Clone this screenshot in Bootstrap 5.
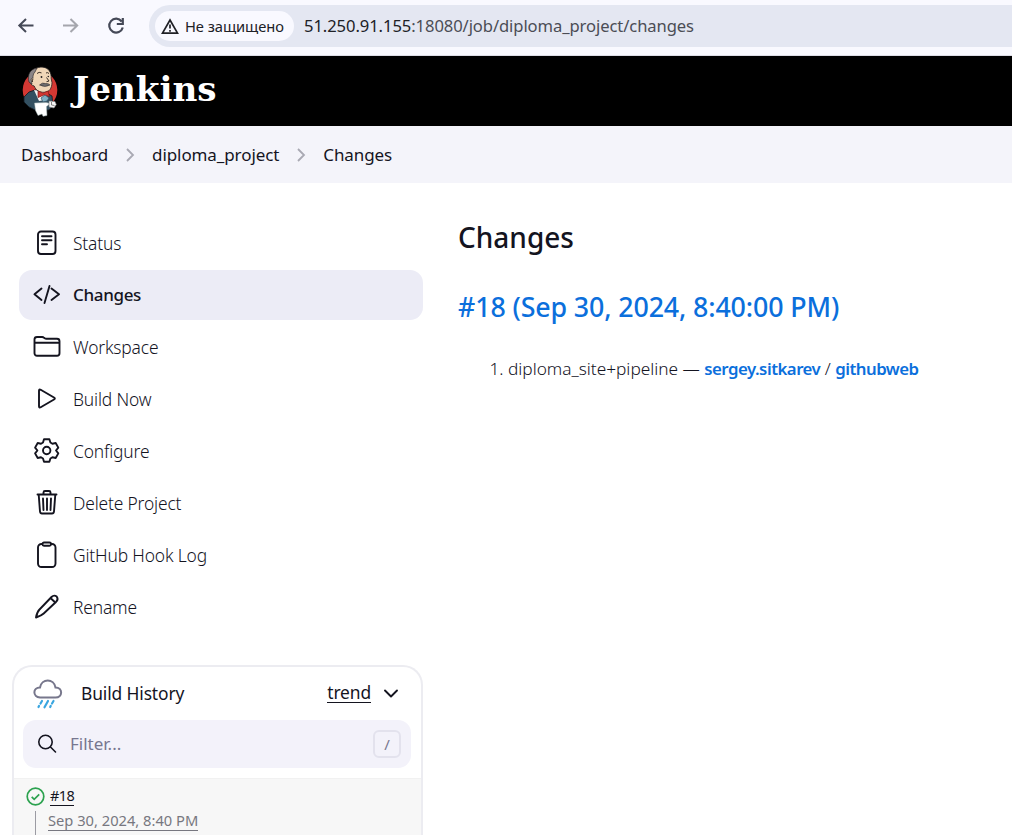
<!DOCTYPE html>
<html lang="en">
<head>
<meta charset="utf-8">
<title>diploma_project Changes [Jenkins]</title>
<link href="https://cdn.jsdelivr.net/npm/bootstrap@5.3.0/dist/css/bootstrap.min.css" rel="stylesheet">
<style>
body{font-family:"Noto Sans","Open Sans",sans-serif;color:#14141f;background:#fff;overflow:hidden;height:835px}
.page{width:1012px;height:835px;overflow:hidden}
svg{flex:none;display:block}
a{text-decoration:none;color:#0b6fdc}
.browser-bar{height:56px;background:#f9f9ff;border-bottom:1px solid #dddde6;padding:5px 0 8px 15px}
.omni{height:42px;margin-left:22px;background:#e4e7f2;border-radius:21px 0 0 21px;padding-left:6px}
.chip{height:30px;width:139px;border-radius:15px;background:#f9f9ff;padding-left:6px;font-size:14.7px;letter-spacing:-.05px;color:#202126}
.chip span{margin-left:6px}
.url{margin-left:10px;font-size:16.6px;color:#4b4d55;letter-spacing:-.09px;white-space:nowrap}
.url b{font-weight:400;color:#202126;letter-spacing:-.08px}
.masthead{height:70px;background:#000;padding-left:20px}
.brand{font:700 34.2px/1 "DejaVu Serif",serif;color:#fff;margin:-3px 0 0 13px}
.crumbs{height:57px;background:#f4f4fa;padding-left:21px;font-size:17px;letter-spacing:-.1px;font-weight:450}
.side{width:423px;padding:35px 0 0 19px}
.task{height:50px;margin:0 0 2px;width:404px;border-radius:13px;padding-left:14px;font-size:17.4px;letter-spacing:-.16px;font-weight:300}
.task.on{background:#ececf6;font-weight:500;font-size:17px;letter-spacing:-.35px}
.task span{margin-left:12px}
.ink{fill:none;stroke:#14141f;stroke-width:1.9;stroke-linecap:round;stroke-linejoin:round}
.history{width:411px;height:220px;margin:33px 0 0 -7px;border:2px solid #ececf1;border-radius:20px 20px 0 0;border-bottom:0}
.history-head{height:53px;padding:0 22px 0 19px;font-size:17.4px;letter-spacing:-.12px;font-weight:450}
.under{border-bottom:1.5px solid currentColor}
.filter{height:48px;margin:0 10px 10px 9px;border-radius:13px;background:#f3f2fa;padding:0 10px 0 13px;font-size:17px;color:#77778f}
.key{width:28px;height:28px;border:2px solid #e3e2ed;border-radius:6px;font-size:15px}
.runs{background:#f7f7f7;height:80px;padding:7px 0 0 12px;border-top:1px solid #f1f1f1}
.run-date{font-size:14.7px;color:#777780;margin:5px 0 0 9px;padding-left:12px;border-left:1px solid #9b9ba3;height:30px;line-height:19px}
.main-panel{padding:36px 0 0 35px}
h1{font-size:28px;font-weight:500;line-height:36px;margin:0}
h2{font-size:26.8px;font-weight:500;line-height:36px;margin:34px 0 0;letter-spacing:-.13px;color:#0b6fdc}
.log{font-size:17.3px;font-weight:300;line-height:24px;margin:32px 0 0;padding-left:50px;letter-spacing:0}
.log li{letter-spacing:-.02px;white-space:nowrap}
.log a{font-weight:600;font-size:16.8px;letter-spacing:-.5px}
</style>
</head>
<body>
<div class="page">
  <div class="browser-bar d-flex align-items-center">
    <svg width="22" height="22" viewBox="0 0 22 22" fill="none" stroke="#454957" stroke-width="2"><path d="M18.5 10.5H4.5M11 4l-6.7 6.5L11 17"/></svg>
    <svg width="22" height="22" viewBox="0 0 22 22" fill="none" stroke="#a5a6ad" stroke-width="2" style="margin-left:23px"><path d="M3 10.500H17M10.500 4l6.700 6.500L10.500 17"/></svg>
    <svg width="22" height="22" viewBox="0 0 22 22" fill="none" stroke="#454957" stroke-width="2.200" style="margin-left:23px"><path d="M16.700 6.500A6.900 6.900 0 1 0 17.800 12.500M17.800 3v6h-6"/></svg>
    <div class="omni d-flex align-items-center flex-grow-1">
      <div class="chip d-flex align-items-center">
        <svg width="18" height="17" viewBox="0 0 18 17" fill="none" stroke="#202126" stroke-width="1.700"><path d="M9 2L16.500 15.200H1.500zM9 6.500v4M9 12v1.700"/></svg>
        <span>Не защищено</span>
      </div>
      <div class="url"><b>51.250.91.155</b>:18080/job/diploma_project/changes</div>
    </div>
  </div>

  <header class="masthead d-flex align-items-center">
    <svg width="40" height="52" viewBox="0 0 40 52">
      <ellipse cx="20" cy="25" rx="17.300" ry="18.500" fill="#d33833"/>
      <path d="M4 32l5-5 6-2 10 2 7 4 1 10-4 4H15l-6-3-5-5z" fill="#335061" stroke="#101820" stroke-width=".8"/>
      <path d="M14 25l5 11 7-1 1-8z" fill="#f4f4f4"/>
      <path d="M9.500 14C10 5 17 1.500 23 2.200c6 .6 8.500 5.500 8.200 11.500l.8 4c-.2 6-3 9.300-7.500 9.600-5 .2-8.500-1.700-10.300-6.300-3-.6-5-3.500-4.700-7z" fill="#f0d6b7" stroke="#231f20" stroke-width=".8"/>
      <path d="M9 17C7 10 10 4 17 3l-2 4c-2 2-2 4-2 6l-2 1 1 5z" fill="#8a8486" stroke="#231f20" stroke-width=".6"/>
      <path d="M17 8.500q2-2 4.500-.6M26 8q1.500-1 3 .5M26.500 12.500l2.500 3.500-2.500.7M13.500 14q-2 0-1 3" fill="none" stroke="#3b3028" stroke-width="1"/>
      <circle cx="21.500" cy="12" r=".9" fill="#231f20"/><circle cx="28.300" cy="11.500" r=".8" fill="#231f20"/>
      <path d="M19.500 20q3-3 6-1.500 3-.5 4.500 1.500-5 3-10.500 0z" fill="#6d6b6d" stroke="#231f20" stroke-width=".5"/>
      <path d="M18 26l5 2 5-2 1.500 5.500-5.500-1.500-6 2.500z" fill="#d33833" stroke="#7d1715" stroke-width=".7"/>
      <path d="M21 33l4-3 4 3-2 3-4 1z" fill="#81b0c4" stroke="#335061" stroke-width=".7"/>
      <path d="M14.500 38l11.500-.5 4.500 1-4 3 .5 9-4 .8-1-2.300-4 1.500-2.500-5z" fill="#fff" stroke="#9aa" stroke-width=".5"/>
      <path d="M29 36l6 .5 1.300 3-2.300 3.500-5-1z" fill="#f7f7f7" stroke="#777" stroke-width=".6"/><path d="M31.500 37v3l3 .5" fill="none" stroke="#555" stroke-width=".7"/>
    </svg>
    <div class="brand">Jenkins</div>
  </header>

  <nav class="crumbs d-flex align-items-center">
    <span>Dashboard</span>
    <svg width="12" height="16" viewBox="0 0 12 16" fill="none" stroke="#a9a9b3" stroke-width="1.800" style="margin:0 16px"><path d="M3 2l6 6-6 6"/></svg>
    <span>diploma_project</span>
    <svg width="12" height="16" viewBox="0 0 12 16" fill="none" stroke="#a9a9b3" stroke-width="1.800" style="margin:0 16px"><path d="M3 2l6 6-6 6"/></svg>
    <span>Changes</span>
  </nav>

  <div class="d-flex">
    <aside class="side flex-shrink-0">
      <div class="task d-flex align-items-center"><svg class="ink" width="28" height="28" viewBox="0 0 28 28"><rect x="5" y="2.500" width="17.500" height="22.500" rx="3"/><path d="M9 7.200h9.500M9 11.200h9.500M9 15.200h5"/></svg><span>Status</span></div>
      <div class="task on d-flex align-items-center"><svg class="ink" width="28" height="28" viewBox="0 0 28 28"><path d="M8.500 7.500L1.500 13.300l7 5.700M18.500 7.500l7.500 5.800-7.500 5.700M16.500 5L11.500 22"/></svg><span>Changes</span></div>
      <div class="task d-flex align-items-center"><svg class="ink" width="28" height="28" viewBox="0 0 28 28"><path d="M1.500 9.700h25M1.500 20V6.500a2.500 2.500 0 0 1 2.500-2.500h5.200q1 0 1.800.8l.7.500q.7.500 1.600.5H24a2.500 2.500 0 0 1 2.500 2.500V20.300a2.500 2.500 0 0 1-2.500 2.500H4a2.500 2.500 0 0 1-2.500-2.500z"/></svg><span>Workspace</span></div>
      <div class="task d-flex align-items-center"><svg class="ink" width="28" height="28" viewBox="0 0 28 28"><path d="M6 5.800v15.400q0 2 1.700 1L21 14.500q1.700-1 0-2L7.700 4.800Q6 4 6 5.800z"/></svg><span>Build Now</span></div>
      <div class="task d-flex align-items-center"><svg class="ink" width="28" height="28" viewBox="0 0 28 28"><circle cx="13.700" cy="13.500" r="3.700"/><path d="M11 2.300h5.400l1 3.200 2 1.200 3.300-.7L25.300 10.600 23 13.500l2.300 2.900L22.700 21l-3.300-.7-2 1.200-1 3.200H11l-1-3.200-2-1.200-3.300.7L2.100 16.400l2.300-2.900L2.100 10.600 4.700 6l3.300.7 2-1.200z"/></svg><span>Configure</span></div>
      <div class="task d-flex align-items-center"><svg class="ink" width="28" height="28" viewBox="0 0 28 28"><path d="M4.500 5.500h19M5.700 5.500l1.300 17q.2 2 2 2h10q1.800 0 2-2l1.300-17M10.500 5V3.500Q10.500 2 12 2h4q1.500 0 1.500 1.500V5M14 9.500v11.500M10 9.500l.5 11.500M18 9.500L17.500 21"/></svg><span>Delete Project</span></div>
      <div class="task d-flex align-items-center"><svg class="ink" width="28" height="28" viewBox="0 0 28 28"><rect x="5" y="3" width="17.500" height="23" rx="3.500"/><rect x="9.500" y="1.500" width="8.500" height="3.300" rx="1.500" fill="#fff"/></svg><span>GitHub Hook Log</span></div>
      <div class="task d-flex align-items-center"><svg class="ink" width="28" height="28" viewBox="0 0 28 28"><path d="M3 24.500q1-5.500 3.500-8L18.500 4Q21 1.500 23.700 3.500q2 2.700-.5 5.200L10.700 20.500Q8.500 22.500 3 24.500zM17.500 5l5 4.700"/></svg><span>Rename</span></div>

      <section class="history overflow-hidden">
        <div class="history-head d-flex align-items-center">
          <svg width="30" height="32" viewBox="0 0 30 32" fill="none" stroke-linecap="round" stroke-width="2"><path d="M7 19.500C-.5 19-.5 9.500 7 9.500 8.500 0 21 0 22.500 9.500c7.500 0 7.500 10 0 10z" stroke="#77778c"/><path d="M9 23l-1.500 2.500M6 28l-.5 1M15 23l-3.500 6.300M20.500 23L19 25.500M17.700 28l-.5 1" stroke="#3aa6e0" stroke-width="2.200"/></svg>
          <span style="margin-left:18px">Build History</span>
          <span class="under ms-auto lh-1 pb-0">trend</span>
          <svg class="ink" width="16" height="12" viewBox="0 0 16 12" style="margin-left:12px"><path d="M2 2.500l6 6 6-6"/></svg>
        </div>
        <div class="filter d-flex align-items-center">
          <svg class="ink" width="22" height="22" viewBox="0 0 22 22" style="stroke-width:1.600"><circle cx="9.500" cy="9" r="6.700"/><path d="M14.500 14l5 5"/></svg>
          <span style="margin-left:12px">Filter...</span>
          <span class="key ms-auto d-flex align-items-center justify-content-center">/</span>
        </div>
        <div class="runs">
          <div class="d-flex align-items-center" style="height:20px">
            <svg width="19" height="19" viewBox="0 0 19 19" fill="none" stroke="#2ca24f" stroke-width="1.700"><circle cx="9.500" cy="9.500" r="8.300"/><path d="M5.700 9.800l2.500 2.500 5-5"/></svg>
            <span class="under" style="margin-left:5px;font-size:14.500px;line-height:19px;letter-spacing:-.6px">#18</span>
          </div>
          <div class="run-date"><span class="under">Sep 30, 2024, 8:40 PM</span></div>
        </div>
      </section>
    </aside>
    <main class="main-panel">
      <h1>Changes</h1>
      <h2>#18 (Sep 30, 2024, 8:40:00 PM)</h2>
      <ol class="log"><li>diploma_site+pipeline — <a href="#">sergey.sitkarev</a> / <a href="#">githubweb</a></li></ol>
    </main>
  </div>
</div>
<script src="https://cdn.jsdelivr.net/npm/bootstrap@5.3.0/dist/js/bootstrap.bundle.min.js"></script>
</body>
</html>
